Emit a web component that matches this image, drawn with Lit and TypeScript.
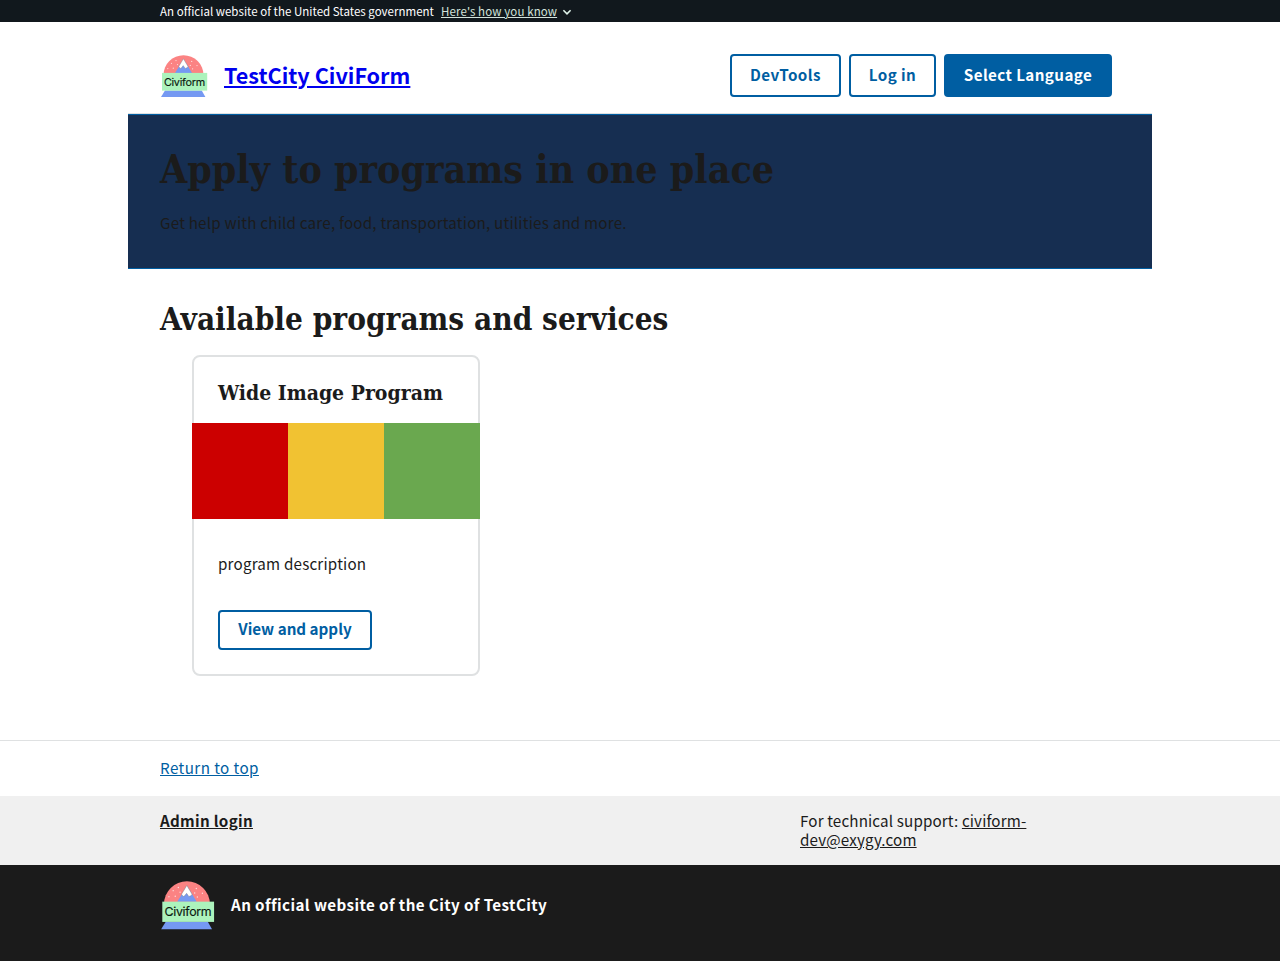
import { LitElement, html, css } from "lit";
import { customElement } from "lit/decorators.js";

@customElement("civiform-logo")
class CiviformLogo extends LitElement {
  static styles = css`
    :host { display: block; }
    svg { display: block; width: 100%; height: 100%; }
    .word { font-family: Inter, sans-serif; font-size: 10.8px; font-weight: 400; fill: #0c1a11; stroke: #0c1a11; stroke-width: .15px; }
  `;
  render() {
    return html`<svg viewBox="0 0 48 44" role="img" aria-label="Civiform">
      <path d="M3.5 21A20 19.8 0 0 1 43.5 21Z" fill="#fb8383"></path>
      <g fill="#fff" opacity=".75">
        <circle cx="16" cy="6.6" r=".6"></circle><circle cx="11.5" cy="9.3" r=".6"></circle>
        <circle cx="17.5" cy="10.6" r=".6"></circle><circle cx="7.8" cy="14.6" r=".6"></circle>
        <circle cx="13.3" cy="14.2" r=".6"></circle><circle cx="31.7" cy="7.4" r=".6"></circle>
        <circle cx="30.3" cy="11.4" r=".6"></circle><circle cx="37" cy="11.6" r=".6"></circle>
        <circle cx="32.6" cy="14.8" r=".6"></circle>
      </g>
      <path d="M15 19L19.6 11.5L23.4 5L27.6 11.5L32 19Z" fill="#7599f2"></path>
      <path d="M23.4 4.8L18.8 12.4L20.2 14.5L21.5 13.8L23.2 11.6L25.2 14.4L27 13.8L28 12.4Z" fill="#fff" stroke="#777" stroke-width=".35"></path>
      <path d="M5 36.5H41.7L45.4 43H1Z" fill="#7599f2"></path>
      <rect x="2" y="18.9" width="45.2" height="17.7" fill="#acf3bc"></rect>
      <text class="word" x="3.9" y="31.7" textLength="41.2">Civiform</text>
    </svg>`;
  }
}

@customElement("app-root")
class AppRoot extends LitElement {
  static styles = css`
    :host {
      display: block;
      font-family: "Noto Sans CJK SC", "Open Sans", sans-serif;
      font-size: 15.2px; line-height: 19px; color: #1b1b1b; background: #fff;
    }
    * { box-sizing: border-box; }
    h1, h2, h3, p { margin: 0; }
    .wrap { width: 1024px; margin: 0 auto; padding: 0 32px; }
    .banner { height: 22px; background: #11181d; color: #fff; font-size: 11.5px; line-height: 22px; letter-spacing: .02px; }
    .banner .wrap { display: flex; align-items: center; }
    .gov { width: 281px; white-space: nowrap; }
    .know { color: #d2e3db; text-decoration: underline; white-space: nowrap; width: 116px; letter-spacing: .11px; }
    .chev { width: 10px; height: 7px; margin-left: 5px; margin-top: 2px; }
    .header { height: 91px; display: flex; align-items: center; justify-content: space-between; padding-top: 16px; }
    .brand { display: flex; align-items: center; gap: 16px; }
    .logo { width: 48px; height: 44px; margin-top: 1px; }
    .title { color: #00e; font-size: 21.6px; font-weight: 700; line-height: 28px; text-decoration: underline; white-space: nowrap; padding-bottom: 2px; }
    .actions { display: flex; gap: 8px; margin-right: 8px; }
    .btn {
      font: inherit; font-weight: 700; line-height: 15px; color: #005ea2; background: transparent;
      border: 2px solid #005ea2; border-radius: 4px; height: 43px; padding: 0 0 2px; white-space: nowrap;
      letter-spacing: .4px;
    }
    .dev { width: 111px; }
    .log { width: 87px; }
    .lang { width: 168px; background: #005ea2; color: #fff; }
    .hero {
      width: 1024px; height: 156px; margin: 0 auto; padding: 31px 32px 0; background: #162e51;
      border-top: 1px solid #dfe1e2; border-bottom: 1px solid #005ea2; box-shadow: inset 0 1px #005ea2;
    }
    h1, h2, h3 { font-family: "DejaVu Serif Condensed", "DejaVu Serif", serif; font-weight: 700; white-space: nowrap; font-stretch: condensed; }
    h1 { font-size: 39px; line-height: 48px; }
    .lead { margin-top: 20px; letter-spacing: .21px; }
    .main { height: 471px; padding-top: 30px; }
    h2 { font-size: 31.25px; line-height: 40px; }
    .card { width: 288px; height: 321px; margin: 16px 0 0 32px; border: 2px solid #dfe1e2; border-radius: 8px; padding-top: 22px; }
    h3 { font-size: 21px; line-height: 28px; padding-left: 24px; }
    .flag { display: flex; height: 96px; margin: 16px -2px 0; }
    .flag i { flex: 1; }
    .red { background: #c00; } .yellow { background: #f1c232; } .green { background: #6aa84f; }
    .desc { margin: 35px 0 0 24px; letter-spacing: .19px; }
    .view { width: 154px; height: 40px; margin: 37px 0 0 24px; letter-spacing: 0; padding-bottom: 3px; }
    .top { height: 56px; border-top: 1px solid #dfe1e2; padding-top: 17px; }
    .top a { color: #005ea2; text-decoration: underline; letter-spacing: .42px; }
    .links { height: 69px; background: #f0f0f0; padding-top: 15px; }
    .links .wrap { display: grid; grid-template-columns: 640px 260px; }
    .links a { text-decoration: underline; }
    .admin { font-weight: 700; letter-spacing: .3px; }
    .support { letter-spacing: .14px; }
    .foot { height: 96px; background: #1b1b1b; color: #fff; font-weight: 700; padding-top: 15px; }
    .foot .wrap { display: flex; gap: 16px; align-items: center; }
    .flogo { width: 55px; height: 50.4px; }
    .city { letter-spacing: .4px; padding-bottom: 2px; }
  `;
  render() {
    return html`
      <div class="banner"><div class="wrap">
        <span class="gov">An official website of the United States government</span>
        <a class="know">Here's how you know</a>
        <svg class="chev" viewBox="0 0 10 7"><path d="M1.4 1.2L5 4.8L8.6 1.2" fill="none" stroke="#dff3e9" stroke-width="1.6"></path></svg>
      </div></div>
      <header class="wrap header">
        <div class="brand"><civiform-logo class="logo"></civiform-logo><a class="title">TestCity CiviForm</a></div>
        <div class="actions">
          <button class="btn dev">DevTools</button><button class="btn log">Log in</button><button class="btn lang">Select Language</button>
        </div>
      </header>
      <section class="hero">
        <h1>Apply to programs in one place</h1>
        <p class="lead">Get help with child care, food, transportation, utilities and more.</p>
      </section>
      <main class="wrap main">
        <h2>Available programs and services</h2>
        <div class="card">
          <h3>Wide Image Program</h3>
          <div class="flag"><i class="red"></i><i class="yellow"></i><i class="green"></i></div>
          <p class="desc">program description</p>
          <button class="btn view">View and apply</button>
        </div>
      </main>
      <div class="top"><div class="wrap"><a>Return to top</a></div></div>
      <div class="links"><div class="wrap">
        <div><a class="admin">Admin login</a></div>
        <div class="support">For technical support: <a>civiform-<br>dev@exygy.com</a></div>
      </div></div>
      <footer class="foot"><div class="wrap"><civiform-logo class="flogo"></civiform-logo><span class="city">An official website of the City of TestCity</span></div></footer>
    `;
  }
}
